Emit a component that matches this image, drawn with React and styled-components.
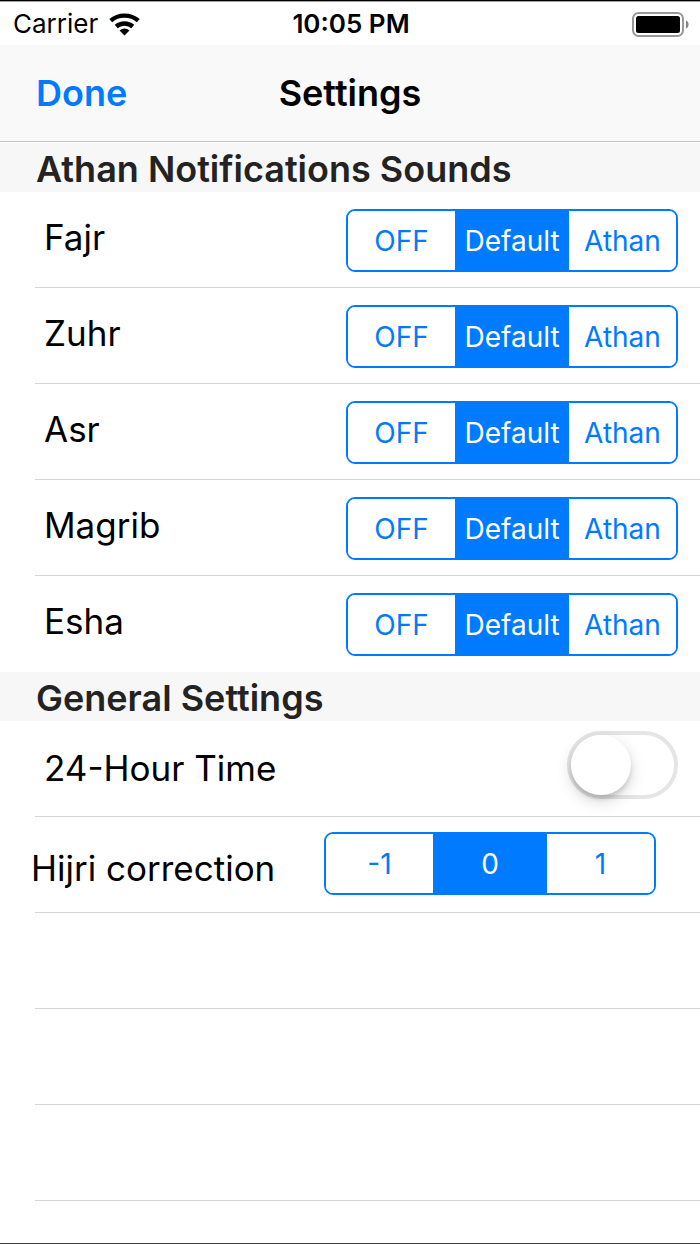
import { useState } from "react";
import styled, { createGlobalStyle, ThemeProvider } from "styled-components";

const theme = {
    colors: {
        tint: '#007aff',
        text: '#000000',
        heading: '#232323',
        bar: '#f9f9f9',
        section: '#f7f7f7',
        line: '#d6d6d8',
        track: '#e5e5e5',
    },
}

const GlobalStyle = createGlobalStyle`
    * {
        box-sizing: border-box;
    }
    body {
        margin: 0;
        background-color: #ffffff;
        color: #000000;
        font-family: Inter, "Liberation Sans", sans-serif;
    }
`
const Screen = styled.div`
    display: flex;
    flex-direction: column;
    min-height: 100vh;
    border-top: 1px solid #000000;
    border-bottom: 1px solid #3c3c3c;
`
const StatusBar = styled.div`
    display: grid;
    grid-template-columns: 1fr auto 1fr;
    align-items: center;
    height: 44px;
    padding: 1px 11px 0 13px;
    border-top: 1px solid #a0a0a0;
    font-size: 26px;
    line-height: 32px;
`
const Carrier = styled.div`
    display: flex;
    align-items: center;
    gap: 11px;
`
const Time = styled.div`
    font-weight: 600;
`
const Battery = styled.svg`
    justify-self: end;
`
const NavBar = styled.header`
    display: grid;
    grid-template-columns: 1fr auto 1fr;
    align-items: center;
    height: 97px;
    padding: 0 36px;
    background-color: ${({theme})=> theme.colors.bar};
    border-bottom: 1px solid #c4c4c5;
`
const DoneButton = styled.button`
    justify-self: start;
    padding: 0;
    border: 0;
    background: none;
    color: ${({theme})=> theme.colors.tint};
    font: inherit;
    font-size: 36px;
    font-weight: 600;
    line-height: 44px;
    cursor: pointer;
`
const Title = styled.h1`
    margin: 0;
    font-size: 36px;
    font-weight: 600;
    line-height: 44px;
`
const Content = styled.main`
    padding-top: 1px;
`
const SectionTitle = styled.h2`
    height: 49px;
    margin: 0;
    padding: 4px 36px 0;
    background-color: ${({theme})=> theme.colors.section};
    color: ${({theme})=> theme.colors.heading};
    font-size: 36px;
    font-weight: 600;
    line-height: 44px;
    white-space: nowrap;
`
const Rows = styled.div`
    padding-left: 35px;
`
const Row = styled.div`
    display: flex;
    justify-content: space-between;
    align-items: flex-start;
    height: 96px;
    padding: ${({$inset})=> $inset ? '15px 44px 0 0' : '17px 22px 0 9px'};
    border-bottom: 1px solid ${({theme, $last})=> $last ? 'transparent' : theme.colors.line};
`
const labelTop = {
    high: '6px',
    middle: '8px',
    low: '14px',
}
const RowLabel = styled.label`
    padding-top: ${({$align = 'high'})=> labelTop[$align]};
    margin-left: ${({$outdent})=> $outdent ? '-4px' : '0'};
    font-size: 35px;
    line-height: 44px;
    white-space: nowrap;
`
const Segments = styled.div`
    display: grid;
    grid-template-columns: 1fr 114px 1fr;
    width: 332px;
    height: 63px;
    border: 2px solid ${({theme})=> theme.colors.tint};
    border-radius: 9px;
    overflow: hidden;
`
const Segment = styled.label`
    display: grid;
    place-items: center;
    background-color: ${({theme, $active})=> $active ? theme.colors.tint : '#ffffff'};
    color: ${({theme, $active})=> $active ? '#ffffff' : theme.colors.tint};
    font-size: 28px;
    line-height: 36px;
    cursor: pointer;
`
const Radio = styled.input`
    grid-area: 1 / 1;
    appearance: none;
    width: 100%;
    height: 100%;
    margin: 0;
    outline: none;
    cursor: pointer;
`
const SegmentText = styled.span`
    grid-area: 1 / 1;
`
const Switch = styled.input`
    appearance: none;
    display: flex;
    width: 111px;
    height: 68px;
    margin: -7px 0 0;
    border: 4px solid ${({theme})=> theme.colors.track};
    border-radius: 34px;
    background-color: #ffffff;
    cursor: pointer;

    &::before {
        content: '';
        width: 60px;
        height: 60px;
        border-radius: 50%;
        background-color: #ffffff;
        box-shadow: 0 6px 16px rgba(0, 0, 0, 0.16), 0 4px 4px rgba(0, 0, 0, 0.12);
    }
    &:checked {
        justify-content: flex-end;
        border-color: #4cd964;
        background-color: #4cd964;
    }
`

const WifiIcon = ()=>(
    <svg width="31" height="23" viewBox="0 0 31 23" fill="none" stroke="#000" strokeWidth="4.4" aria-hidden="true">
        <path d="M1.7 7.6C9.3 .9 21.7 .9 29.3 7.6" />
        <path d="M7.2 13.5C11.9 9.4 19.1 9.4 23.8 13.5" />
        <path d="M10.6 17.6C13.3 14.8 17.7 14.8 20.4 17.6L15.5 22.5Z" fill="#000" stroke="none" />
    </svg>
)

const BatteryIcon = ()=>(
    <Battery width="57" height="25" viewBox="0 0 57 25" aria-hidden="true">
        <rect x="1" y="1" width="50" height="23" rx="5.5" fill="none" stroke="#999" strokeWidth="2" />
        <rect x="4" y="4" width="44" height="17" rx="2.5" fill="#000" />
        <path d="M54 8.5C57.4 9.5 57.4 15.5 54 16.5Z" fill="#888" />
    </Battery>
)

const SegmentedControl = ({name, label, options, initial})=>{
    const [value, setValue] = useState(initial)
    return(
        <Segments role="radiogroup" aria-labelledby={label}>
            {options.map((option)=>(
                <Segment key={option} $active={option === value}>
                    <Radio
                        type="radio"
                        name={name}
                        checked={option === value}
                        onChange={()=> setValue(option)}
                    />
                    <SegmentText>{option}</SegmentText>
                </Segment>
            ))}
        </Segments>
    )
}

const prayers = ['Fajr', 'Zuhr', 'Asr', 'Magrib', 'Esha']
const sounds = ['OFF', 'Default', 'Athan']
const corrections = ['-1', '0', '1']

const App = ()=>{
    const [is24Hour, setIs24Hour] = useState(false)
    return(
        <ThemeProvider theme={theme}>
            <GlobalStyle />
            <Screen>
                <StatusBar>
                    <Carrier>
                        Carrier
                        <WifiIcon />
                    </Carrier>
                    <Time>10:05 PM</Time>
                    <BatteryIcon />
                </StatusBar>

                <NavBar>
                    <DoneButton type="button">Done</DoneButton>
                    <Title>Settings</Title>
                </NavBar>

                <Content>
                    <SectionTitle>Athan Notifications Sounds</SectionTitle>
                    <Rows>
                        {prayers.map((prayer, i)=>(
                            <Row key={prayer} $last={i === prayers.length - 1}>
                                <RowLabel as="span" id={prayer}>{prayer}</RowLabel>
                                <SegmentedControl
                                    name={`${prayer}-sound`}
                                    label={prayer}
                                    options={sounds}
                                    initial="Default"
                                />
                            </Row>
                        ))}
                    </Rows>

                    <SectionTitle>General Settings</SectionTitle>
                    <Rows>
                        <Row>
                            <RowLabel htmlFor="hour-format" $align="middle">24-Hour Time</RowLabel>
                            <Switch
                                id="hour-format"
                                type="checkbox"
                                role="switch"
                                checked={is24Hour}
                                onChange={(e)=> setIs24Hour(e.target.checked)}
                            />
                        </Row>
                        <Row $inset>
                            <RowLabel as="span" id="hijri" $align="low" $outdent>Hijri correction</RowLabel>
                            <SegmentedControl
                                name="hijri-correction"
                                label="hijri"
                                options={corrections}
                                initial="0"
                            />
                        </Row>
                        <Row />
                        <Row />
                        <Row />
                    </Rows>
                </Content>
            </Screen>
        </ThemeProvider>
    )
}

export default App
